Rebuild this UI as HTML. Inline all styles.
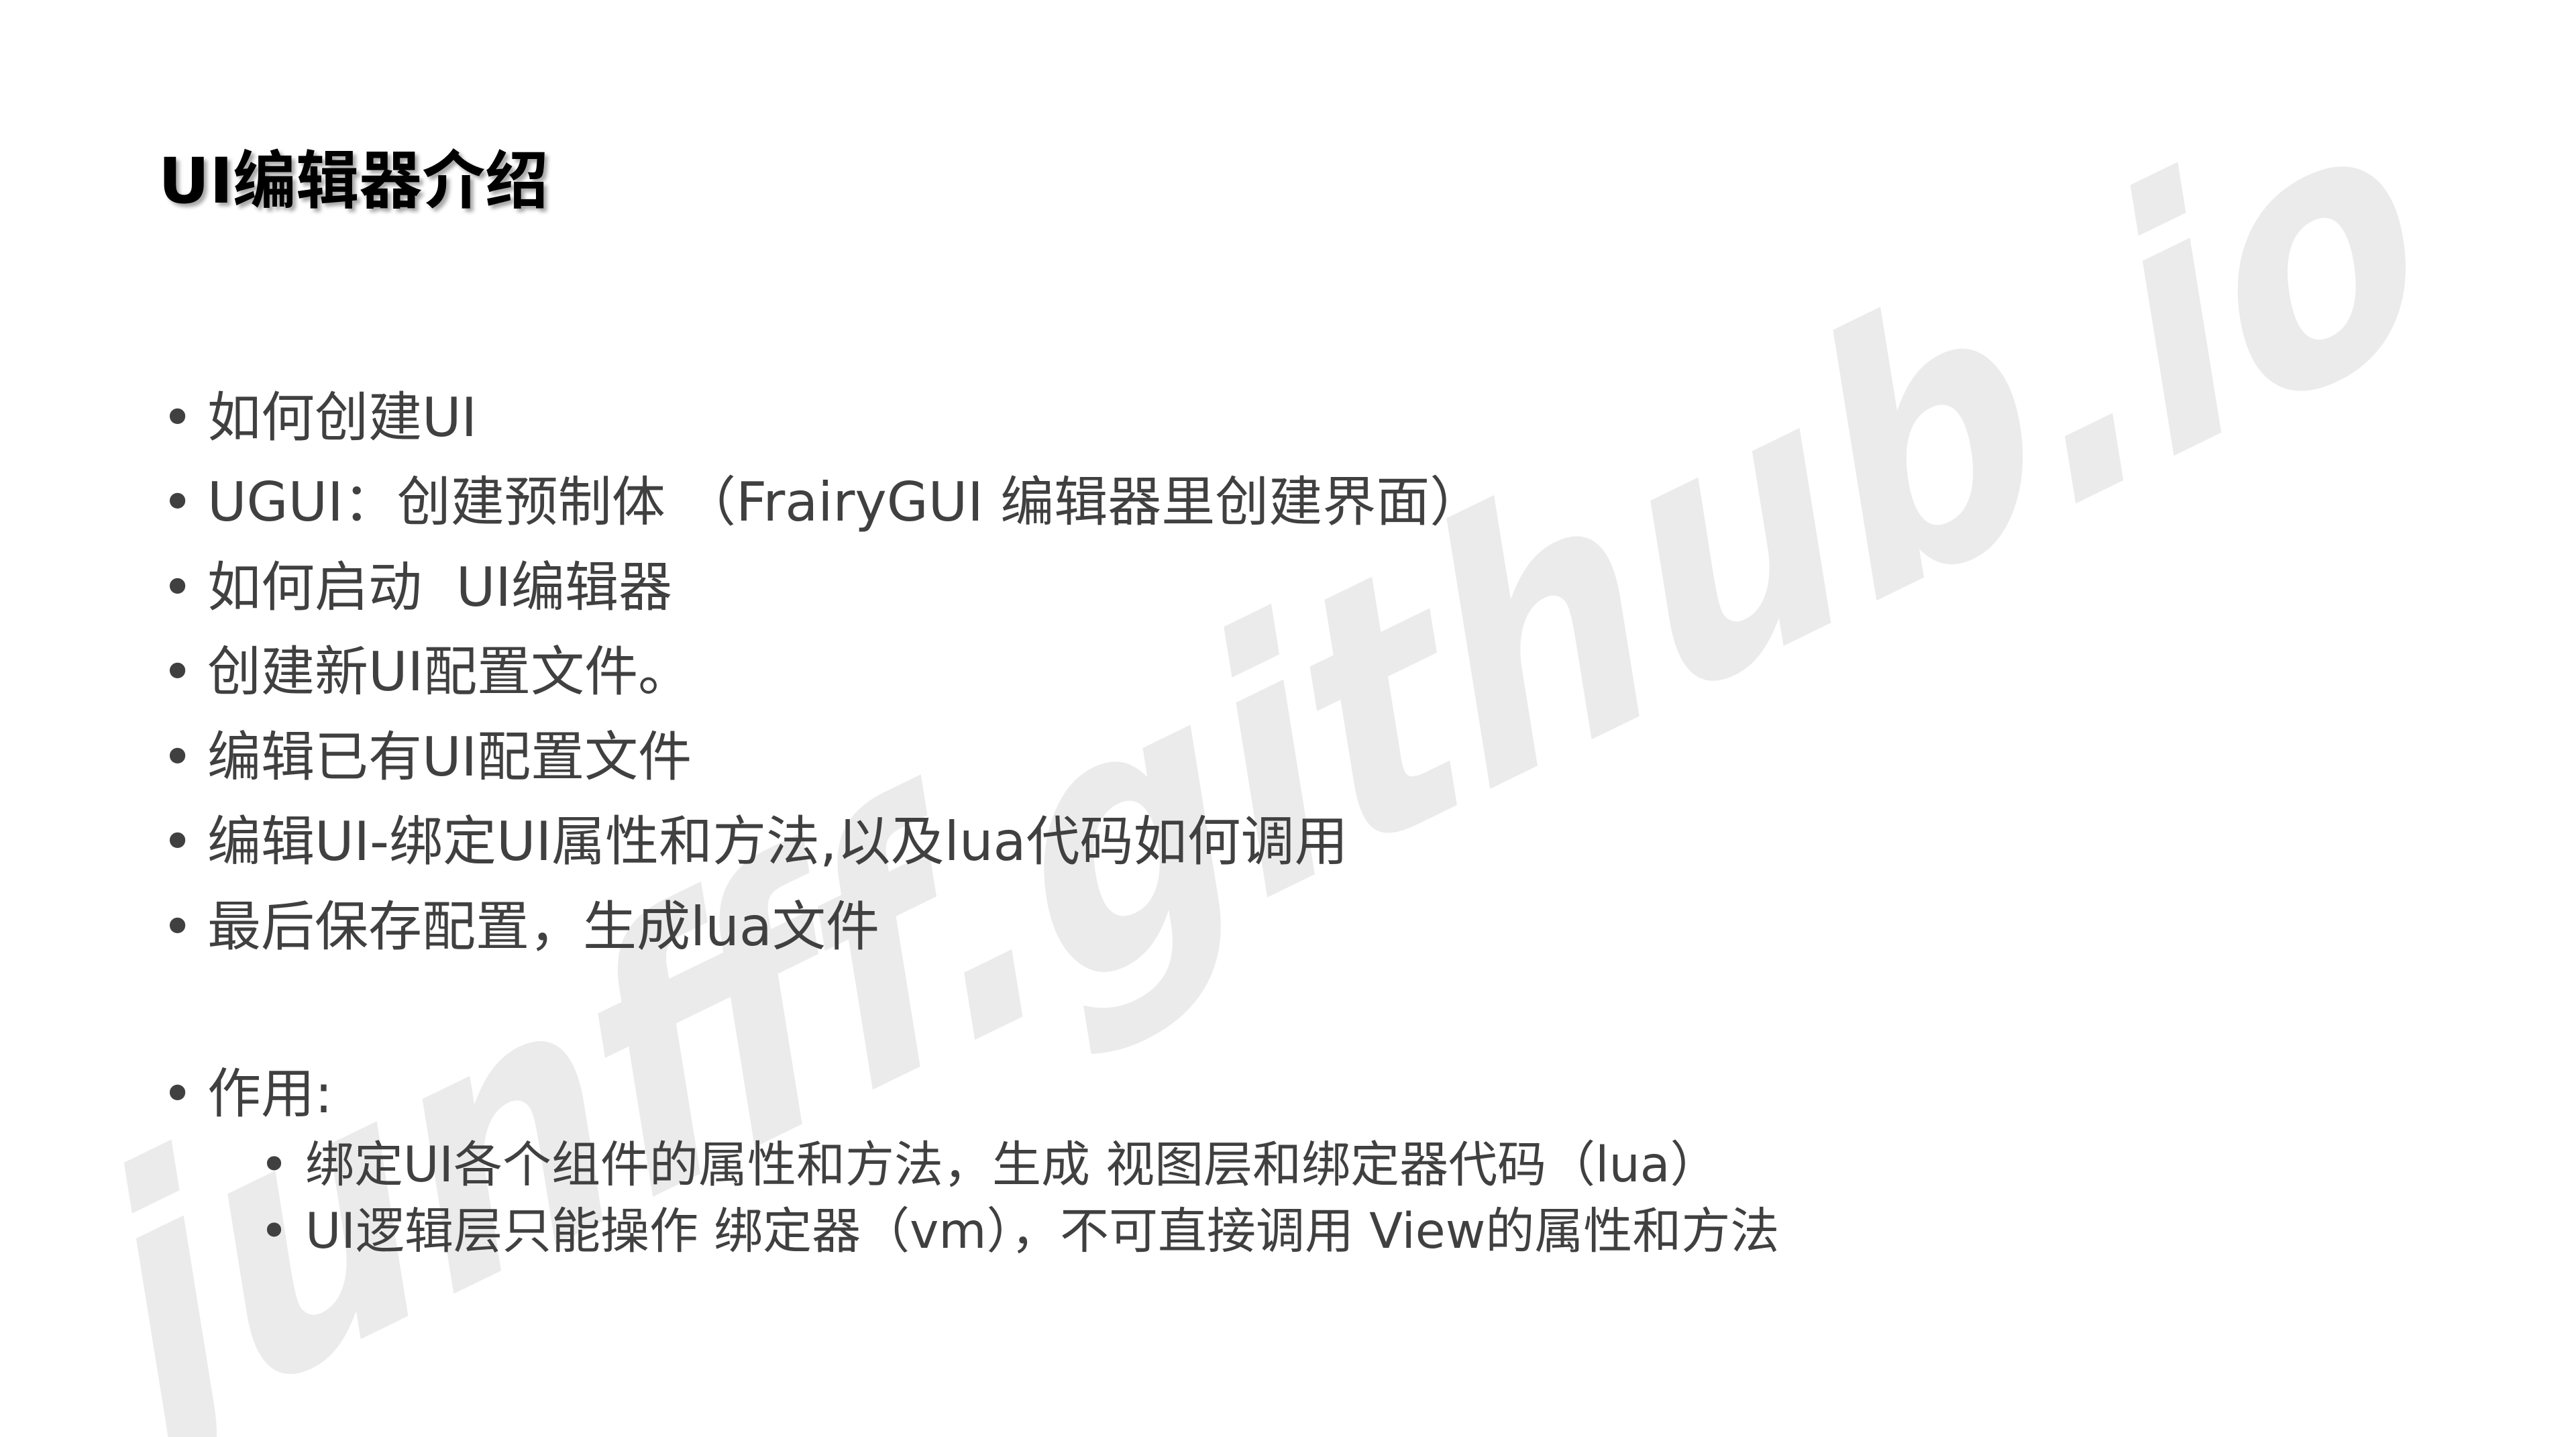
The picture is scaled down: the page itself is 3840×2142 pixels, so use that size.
<!DOCTYPE html>
<html><head><meta charset="utf-8"><style>
html,body{margin:0;padding:0;width:3840px;height:2142px;background:#fff;overflow:hidden;position:relative}
.clip{position:absolute;left:0;top:0;width:3840px;height:2142px;overflow:hidden}
.wm{position:absolute;left:1890px;top:1140px;white-space:nowrap;font-family:"DejaVu Sans",sans-serif;font-weight:bold;font-size:450px;color:#ebebeb;transform:translate(-50%,-50%) matrix(0.899,-0.438,0.19,1.18,0,0);line-height:1}
.t{position:absolute;left:236px;top:215px;font-family:"DejaVu Sans","Noto Sans CJK SC",sans-serif;font-weight:bold;font-size:94px;color:#000;text-shadow:5px 5px 6px rgba(0,0,0,.35);line-height:1.2}
.l{position:absolute;font-family:"DejaVu Sans","Noto Sans CJK SC",sans-serif;color:#404040;white-space:nowrap;line-height:1}
.b1{font-size:80px;left:309px}
.b2{font-size:73px;left:455px}
.l::before{content:"•";position:absolute}
.b1::before{left:-68px}
.b2::before{left:-68px}
</style></head><body>
<div class="clip"><div class="wm">junfff.github.io</div></div>
<div class="t">UI编辑器介绍</div>
<div class="l b1" style="top:583px">如何创建UI</div>
<div class="l b1" style="top:709px">UGUI：创建预制体 （FrairyGUI 编辑器里创建界面）</div>
<div class="l b1" style="top:836px">如何启动&nbsp; UI编辑器</div>
<div class="l b1" style="top:962px">创建新UI配置文件。</div>
<div class="l b1" style="top:1089px">编辑已有UI配置文件</div>
<div class="l b1" style="top:1215px">编辑UI-绑定UI属性和方法,以及lua代码如何调用</div>
<div class="l b1" style="top:1342px">最后保存配置，生成lua文件</div>
<div class="l b1" style="top:1591px">作用:</div>
<div class="l b2" style="top:1700px">绑定UI各个组件的属性和方法，生成 视图层和绑定器代码（lua）</div>
<div class="l b2" style="top:1799px">UI逻辑层只能操作 绑定器（vm），不可直接调用 View的属性和方法</div>
</body></html>
